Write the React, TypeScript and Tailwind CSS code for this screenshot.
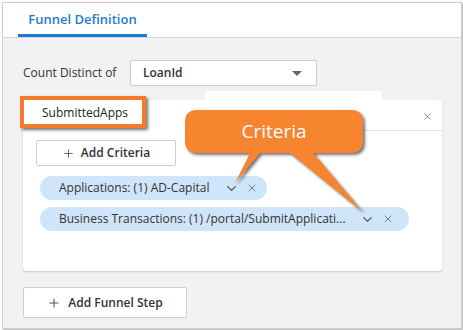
import { Plus, X, ChevronDown } from 'lucide-react';

const font = { fontFamily: '"Open Sans", "Liberation Sans", sans-serif' };

function Chip({ label, width, pr }: { label: string; width: string; pr: string }) {
  return (
    <div className={`flex h-[24px] items-center rounded-full bg-[#cfe5fa] pl-[19px] text-[12px] text-[#333] ${width} ${pr}`}>
      <span className="flex-1 truncate">{label}</span>
      <ChevronDown className="h-[15px] w-[15px] text-[#555]" strokeWidth={2.2} />
      <X className="ml-[7px] h-[12px] w-[12px] text-[#666]" strokeWidth={1.6} />
    </div>
  );
}

export default function App() {
  return (
    <div className="relative h-[330px] w-[463px] overflow-hidden bg-white p-[2px] pb-[1px] pr-[1px]" style={font}>
      <div className="flex h-full flex-col border border-[#cfcfcf] shadow-[1px_1px_2px_rgba(0,0,0,0.35)]">
        {/* Tabs */}
        <div className="flex h-[35px] shrink-0 border-b border-[#d6d6d6] bg-white pl-[15px]">
          <div className="flex h-full w-[129px] items-center justify-center border-b-[3px] border-[#1f7ad1] pt-[2px] text-[13px] font-semibold text-[#1f7ad1]">
            Funnel Definition
          </div>
        </div>

        {/* Body */}
        <div className="flex flex-1 flex-col bg-[#f2f2f2] pl-[20px] pr-[18px] pt-[22px]">
          <div className="flex h-[26px] items-center">
            <span className="w-[107px] text-[12px] text-[#333]">Count Distinct of</span>
            <div className="flex h-[26px] w-[187px] items-center justify-between rounded-[2px] border border-[#cdcdcd] bg-white pl-[12px] pr-[14px]">
              <span className="text-[12px] font-semibold text-[#333]">LoanId</span>
              <span className="h-0 w-0 border-x-[5px] border-t-[5px] border-x-transparent border-t-[#666]" />
            </div>
          </div>

          {/* Step card */}
          <div className="mt-[14px] flex h-[171px] w-[419px] flex-col rounded-[3px] bg-white shadow-[0_1px_2px_rgba(0,0,0,0.2)]">
            <div className="flex h-[30px] shrink-0 items-start">
              <div className="ml-[5px] mt-[1px] flex h-[23px] w-[112px] items-center bg-white pl-[14px] text-[12px] font-medium text-[#222]">
                SubmittedApps
              </div>
              <div className="flex-1" />
              <X className="mr-[9px] mt-[11px] h-[11px] w-[11px] text-[#666]" strokeWidth={1.6} />
            </div>
            <div className="ml-auto h-px w-[80px] bg-[#e2e2e2]" />
            <div className="mt-[9px] flex flex-col pl-[13px]">
              <div className="flex h-[26px] w-[140px] items-center justify-center gap-[6px] rounded-[2px] border border-[#cdcdcd] bg-white text-[12px] font-semibold text-[#333]">
                <Plus className="h-[13px] w-[13px] text-[#555]" strokeWidth={1.6} />
                Add Criteria
              </div>
              <div className="ml-[4px] mt-[10px] flex flex-col gap-[7px]">
                <Chip label="Applications: (1) AD-Capital" width="w-[227px]" pr="pr-[9px]" />
                <Chip label="Business Transactions: (1) /portal/SubmitApplicati..." width="w-[369px]" pr="pr-[15px]" />
              </div>
            </div>
          </div>

          <div className="mt-[16px] flex h-[31px] w-[164px] items-center justify-center gap-[7px] rounded-[2px] border border-[#cdcdcd] bg-white text-[12px] font-semibold text-[#333]">
            <Plus className="h-[14px] w-[14px] text-[#555]" strokeWidth={1.8} />
            Add Funnel Step
          </div>
        </div>
      </div>

      {/* leftover white strip above card */}
      <div className="absolute left-[205px] top-[91px] h-[9px] w-[177px] bg-white" />

      {/* Orange highlight around step name */}
      <div className="absolute left-[20px] top-[96px] h-[32px] w-[126px] border-[4px] border-[#f47b2c] shadow-[2px_2px_3px_rgba(0,0,0,0.55)]" />

      {/* Callout */}
      <svg className="absolute left-[180px] top-[105px]" width="200" height="115" viewBox="0 0 200 115" style={{ filter: 'drop-shadow(2px 2px 1.5px rgba(0,0,0,0.55))' }}>
        <path
          d="M17,5 H171 Q183,5 183,17 V36 Q183,48 171,48 H133 L183,107 L110,48 H80 L55,78 L70,48 H17 Q5,48 5,36 V17 Q5,5 17,5 Z"
          fill="#f7842f"
        />
      </svg>
      <div className="absolute left-[185px] top-[110px] flex h-[43px] w-[178px] items-center justify-center text-[19px] text-white">
        Criteria
      </div>
    </div>
  );
}
